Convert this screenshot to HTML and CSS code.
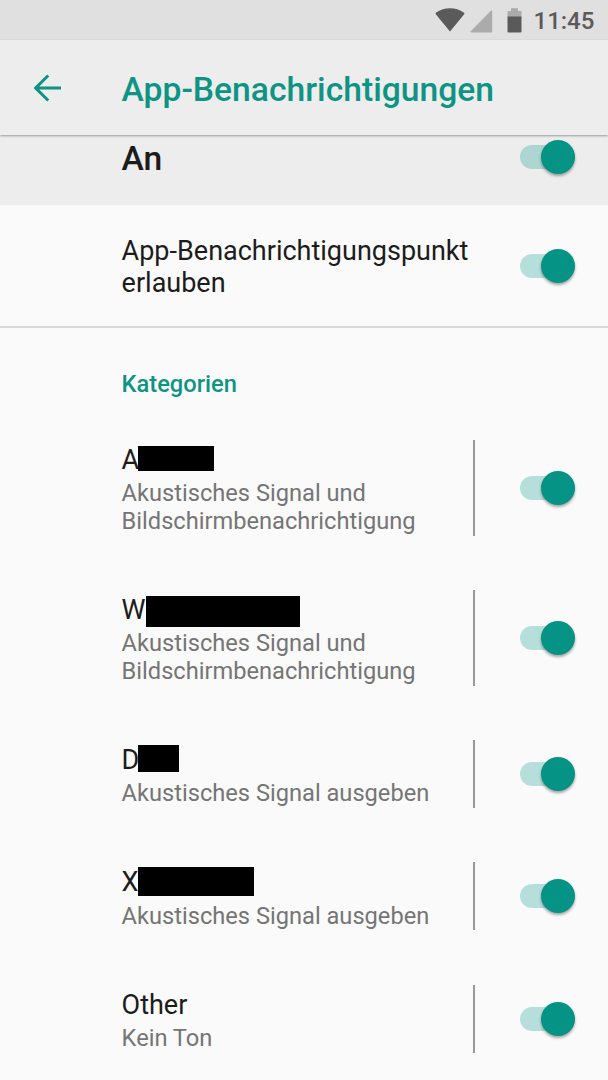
FILE: index.html
```html
<!DOCTYPE html>
<html lang="de">
  <head>
    <meta charset="utf-8">
    <title>App-Benachrichtigungen</title>
    <link rel="stylesheet" href="styles.css">
  </head>
  <body>
    <div class="statusbar">
      <svg class="wifi" width="30" height="24" viewBox="0 0 30 24"><path d="M15 23.4 L0.8 6.2 C0.4 5.6 0.5 5 1.2 4.5 C9 -1.2 21 -1.2 28.8 4.5 C29.5 5 29.6 5.6 29.2 6.2 Z" fill="#5a5a5a"/></svg>
      <svg class="signal" width="23" height="23" viewBox="0 0 23 23"><path d="M22.2 0.8 V21.5 Q22.2 22.4 21.3 22.4 H1.2 Q-0.2 22.2 0.7 21.2 L20.9 0.8 Q22 0 22.2 0.8 Z" fill="#ababab"/></svg>
      <svg class="battery" width="15" height="25" viewBox="0 0 15 25"><path d="M4 0.3 H11 V3 H13.5 Q14.5 3 14.5 4 V9 H0.5 V4 Q0.5 3 1.5 3 H4 Z" fill="#ababab"/><path d="M0.5 8.5 H14.5 V23.5 Q14.5 24.6 13.5 24.6 H1.5 Q0.5 24.6 0.5 23.5 Z" fill="#5a5a5a"/></svg>
      <span class="clock">11:45</span>
    </div>
    <div class="appbar">
      <svg class="back" width="28" height="28" viewBox="0 0 28 28"><path d="M27 14 H2 M14.2 1.5 L1.7 14 L14.2 26.5" fill="none" stroke="#0d9484" stroke-width="3"/></svg>
      <h1>App-Benachrichtigungen</h1>
    </div>
    <div class="master">
      <span class="label">An</span>
      <div class="switch"></div>
    </div>
    <div class="row dot">
      <div class="text"><div class="name">App-Benachrichtigungspunkt<br>erlauben</div></div>
      <div class="switch"></div>
    </div>
    <h2>Kategorien</h2>
    <div class="row category tall">
      <div class="text">
        <div class="name">A<span class="mask mask-a"></span></div>
        <div class="summary">Akustisches Signal und<br>Bildschirmbenachrichtigung</div>
      </div>
      <div class="switch"></div>
    </div>
    <div class="row category tall">
      <div class="text">
        <div class="name">W<span class="mask mask-w"></span></div>
        <div class="summary">Akustisches Signal und<br>Bildschirmbenachrichtigung</div>
      </div>
      <div class="switch"></div>
    </div>
    <div class="row category">
      <div class="text">
        <div class="name">D<span class="mask mask-d"></span></div>
        <div class="summary">Akustisches Signal ausgeben</div>
      </div>
      <div class="switch"></div>
    </div>
    <div class="row category">
      <div class="text">
        <div class="name">X<span class="mask mask-x"></span></div>
        <div class="summary">Akustisches Signal ausgeben</div>
      </div>
      <div class="switch"></div>
    </div>
    <div class="row category">
      <div class="text">
        <div class="name">Other</div>
        <div class="summary">Kein Ton</div>
      </div>
      <div class="switch"></div>
    </div>
  </body>
</html>
```

FILE: styles.css
```css
* { box-sizing: border-box; }
body {
  margin: 0;
  height: 1080px;
  overflow: hidden;
  background: #fafafa;
  color: #1c1c1c;
  font-family: Roboto, "Liberation Sans", sans-serif;
}
h1, h2 {
  margin: 0;
  font-weight: 500;
  color: #0d9484;
}
.statusbar {
  display: flex;
  align-items: flex-start;
  height: 40px;
  padding: 8px 0 0 435px;
  background: #e0e0e0;
}
.signal { margin: 2px 0 0 5px; }
.battery { margin-left: 13.5px; }
.clock {
  margin: -1px 0 0 12px;
  font-size: 24px;
  font-weight: 500;
  line-height: 29px;
  color: #5a5a5a;
}
.appbar {
  position: relative;
  display: flex;
  align-items: center;
  height: 95px;
  padding-left: 34px;
  background: #ededed;
  box-shadow: 0 1px 2px rgba(0, 0, 0, .35);
}
.appbar h1 {
  margin: 5px 0 0 59.6px;
  font-size: 33.65px;
  line-height: 40px;
}
.master {
  display: flex;
  justify-content: space-between;
  height: 70px;
  padding: 5px 33px 0 121.6px;
  background: #ededed;
}
.label {
  font-size: 33.65px;
  font-weight: 500;
  line-height: 38px;
}
.row {
  display: flex;
  align-items: center;
  justify-content: space-between;
  height: 122.3px;
  padding-right: 33px;
}
.dot {
  height: 123px;
  border-bottom: 2px solid #d9d9d9;
}
.dot .text { padding-top: 2px; }
.text {
  width: 474.5px;
  padding-left: 121.6px;
}
.name {
  position: relative;
  font-size: 27px;
  line-height: 32px;
}
.summary {
  margin-top: 3.4px;
  font-size: 23.65px;
  line-height: 28px;
  color: #757575;
}
h2 {
  height: 84.5px;
  padding: 42px 0 0 121.6px;
  font-size: 23.65px;
  line-height: 28px;
}
.category .text {
  height: 68px;
  padding-top: 4px;
  border-right: 2px solid #999;
}
.tall { height: 150.2px; }
.tall .text { height: 96px; }
.switch {
  position: relative;
  width: 55px;
  height: 24px;
  border-radius: 12px;
  background: rgba(0, 150, 136, .27);
}
.master .switch { margin-top: 5px; }
.switch:after {
  content: "";
  position: absolute;
  right: 0;
  top: -5px;
  width: 34px;
  height: 34px;
  border-radius: 50%;
  background: #049384;
  box-shadow: 0 2px 3px rgba(0, 0, 0, .35);
}
/* blacked out names */
.mask {
  position: absolute;
  left: 16.9px;
  background: #000;
}
.mask-a { top: 2px; width: 75.5px; height: 25px; }
.mask-w { left: 24.4px; top: 2px; width: 154px; height: 31px; }
.mask-d { top: 1px; width: 40.5px; height: 26.5px; }
.mask-x { top: 1px; width: 115.5px; height: 29px; }
```
